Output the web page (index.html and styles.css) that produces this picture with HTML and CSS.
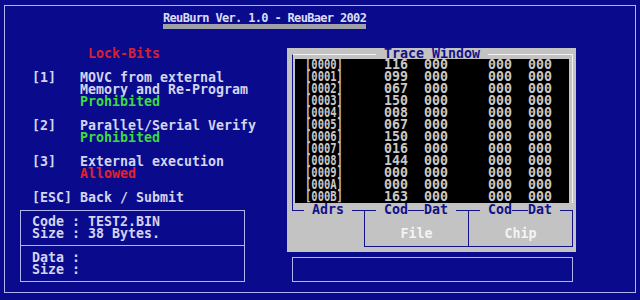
FILE: index.html
```html
<!DOCTYPE html>
<html>
<head>
<meta charset="utf-8">
<title>ReuBurn</title>
<link rel="stylesheet" href="styles.css">
</head>
<body>
<div class="screen">
  <div class="title">ReuBurn Ver. 1.0 - ReuBaer 2002</div>
  <div class="main">
    <div class="left">
      <div class="line heading">Lock-Bits</div>
      <div class="item">
        <span class="key">[1]</span>
        <div class="desc">
          <div class="line">MOVC from external</div>
          <div class="line">Memory and Re-Program</div>
          <div class="line ok">Prohibited</div>
        </div>
      </div>
      <div class="item">
        <span class="key">[2]</span>
        <div class="desc">
          <div class="line">Parallel/Serial Verify</div>
          <div class="line ok">Prohibited</div>
        </div>
      </div>
      <div class="item">
        <span class="key">[3]</span>
        <div class="desc">
          <div class="line">External execution</div>
          <div class="line bad">Allowed</div>
        </div>
      </div>
      <div class="line esc">[ESC] Back / Submit</div>
      <div class="filebox">
        <div class="fb-sec">
          <div class="line">Code : TEST2.BIN</div>
          <div class="line">Size : 38 Bytes.</div>
        </div>
        <div class="fb-sec">
          <div class="line">Data :</div>
          <div class="line">Size :</div>
        </div>
      </div>
    </div>
    <div class="right">
      <div class="trace">
        <div class="tw-head">
          <div class="rule rule-l"></div>
          <div class="tw-title">Trace Window</div>
          <div class="rule rule-r"></div>
        </div>
        <div class="tw-body">
          <div class="data">
            <div class="row"><span class="addr">[0000]</span><span>116</span><span>000</span><span>000</span><span>000</span></div>
            <div class="row"><span class="addr">[0001]</span><span>099</span><span>000</span><span>000</span><span>000</span></div>
            <div class="row"><span class="addr">[0002]</span><span>067</span><span>000</span><span>000</span><span>000</span></div>
            <div class="row"><span class="addr">[0003]</span><span>150</span><span>000</span><span>000</span><span>000</span></div>
            <div class="row"><span class="addr">[0004]</span><span>008</span><span>000</span><span>000</span><span>000</span></div>
            <div class="row"><span class="addr">[0005]</span><span>067</span><span>000</span><span>000</span><span>000</span></div>
            <div class="row"><span class="addr">[0006]</span><span>150</span><span>000</span><span>000</span><span>000</span></div>
            <div class="row"><span class="addr">[0007]</span><span>016</span><span>000</span><span>000</span><span>000</span></div>
            <div class="row"><span class="addr">[0008]</span><span>144</span><span>000</span><span>000</span><span>000</span></div>
            <div class="row"><span class="addr">[0009]</span><span>000</span><span>000</span><span>000</span><span>000</span></div>
            <div class="row"><span class="addr">[000A]</span><span>000</span><span>000</span><span>000</span><span>000</span></div>
            <div class="row"><span class="addr">[000B]</span><span>163</span><span>000</span><span>000</span><span>000</span></div>
          </div>
        </div>
        <div class="tw-foot">
          <div class="col col-a">
            <div class="labels">
              <div class="corner-bl"></div>
              <div class="gap"></div>
              <div class="lbl">Adrs</div>
              <div class="gap"></div>
              <div class="seg w12"></div>
            </div>
          </div>
          <div class="col col-b">
            <div class="labels">
              <div class="seg corner-tl w12"></div>
              <div class="gap"></div>
              <div class="lbl">Cod</div>
              <div class="seg w16"></div>
              <div class="lbl">Dat</div>
              <div class="gap"></div>
              <div class="seg w12"></div>
            </div>
            <div class="cell">File</div>
          </div>
          <div class="col col-c">
            <div class="labels">
              <div class="seg corner-tl w12"></div>
              <div class="gap"></div>
              <div class="lbl">Cod</div>
              <div class="seg w16"></div>
              <div class="lbl">Dat</div>
              <div class="gap"></div>
              <div class="seg corner-tr w13"></div>
            </div>
            <div class="cell cell-last">Chip</div>
          </div>
        </div>
      </div>
      <div class="status"></div>
    </div>
  </div>
</div>
</body>
</html>
```
FILE: styles.css
```css
* { box-sizing: border-box; margin: 0; padding: 0; }
html, body { width: 640px; height: 300px; overflow: hidden; }
body {
  background: #0a0a8c;
  font-family: "DejaVu Sans Mono", "Liberation Mono", monospace;
  font-size: 13.29px;
  font-weight: bold;
  color: #d4d4ec;
}
.screen {
  margin: 5px 0 0 4px;
  width: 632px;
  height: 288px;
  border: 1px solid #b4b4f0;
}
.title {
  margin: 6px 0 0 158px;
  width: 203px;
  height: 17px;
  line-height: 12px;
  font-size: 12px;
  letter-spacing: -0.67px;
  border-bottom: 5px solid #a0a0aa;
  color: #dcdcf8;
  white-space: nowrap;
}
.main { display: flex; }
.left {
  width: 282px;
  padding-top: 19px;
  display: flex;
  flex-direction: column;
  gap: 12px;
}
.line { height: 12px; line-height: 12px; white-space: nowrap; }
.heading { padding-left: 83px; color: #d82030; }
.item { display: flex; padding-left: 27px; line-height: 12px; }
.key { width: 48px; }
.ok { color: #3cdc3c; }
.bad { color: #e8202a; }
.esc { padding-left: 27px; }
.filebox {
  margin: -6px 0 0 15px;
  width: 225px;
  border: 1px solid #b4b4f0;
}
.fb-sec { padding: 5px 0 5px 11px; }
.fb-sec + .fb-sec { border-top: 1px solid #b4b4f0; padding-top: 6px; }

.right { width: 289px; padding-top: 19px; }
.trace {
  height: 204px;
  background: #c3c3c3;
  padding: 0 3px 0 5px;
  color: #12128a;
}
.tw-head { display: flex; height: 11px; }
.rule { margin-top: 6px; border-top: 1px solid #f2f2f2; }
.rule-l { width: 84px; border-left: 1px solid #12128a; }
.rule-r { flex: 1; border-right: 1px solid #f2f2f2; }
.tw-title { padding: 0 8px; line-height: 12px; height: 11px; white-space: nowrap; }
.tw-body {
  border-left: 1px solid #12128a;
  border-right: 1px solid #f2f2f2;
  padding: 0 3px 0 2px;
}
.data { background: #000; color: #c8c8c8; padding-left: 10px; }
.row {
  display: grid;
  grid-template-columns: 79px 40px 64px 40px auto;
  height: 12px;
  line-height: 12px;
  white-space: nowrap;
}
.addr { transform: scaleX(0.79); transform-origin: 0 0; }
.tw-foot { display: flex; height: 44px; }
.col-a { width: 72px; }
.col-b { width: 104px; }
.col-c { width: 105px; }
.labels { display: flex; height: 13px; }
.seg { margin-top: 7px; height: 1px; border-top: 1px solid #12128a; }
.w12 { width: 12px; }
.w13 { width: 13px; }
.w16 { width: 16px; }
.corner-tl { height: 6px; border-left: 1px solid #12128a; }
.corner-tr { height: 6px; border-right: 1px solid #12128a; }
.corner-bl {
  width: 12px;
  height: 8px;
  border-left: 1px solid #12128a;
  border-bottom: 1px solid #12128a;
}
.gap { width: 8px; }
.lbl { margin-top: 1px; height: 12px; line-height: 12px; }
.cell {
  height: 31px;
  padding-top: 12px;
  line-height: 12px;
  text-align: center;
  color: #f4f4f4;
  border-left: 1px solid #12128a;
  border-bottom: 1px solid #12128a;
}
.cell-last { border-right: 1px solid #12128a; }
.status {
  margin: 5px 0 0 5px;
  width: 281px;
  height: 25px;
  border: 1px solid #b4b4f0;
}
```
